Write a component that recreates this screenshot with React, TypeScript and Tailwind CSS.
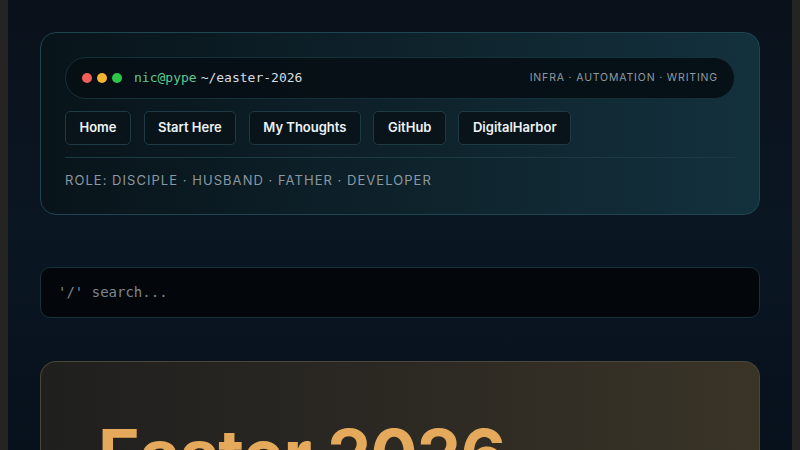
import React from "react";

const mono = { fontFamily: '"DejaVu Sans Mono", "Liberation Mono", monospace' };

export default function App() {
  const links = ["Home", "Start Here", "My Thoughts", "GitHub", "DigitalHarbor"];
  return (
    <div className="w-[800px] h-[450px] overflow-hidden bg-[#242424] flex" style={{ fontFamily: 'Inter, "Noto Sans", sans-serif' }}>
      <div className="ml-[8px] w-[784px] h-full bg-gradient-to-b from-[#0a111b] via-[#0a1622] to-[#07111c] px-[32px] pt-[32px] flex flex-col">
        <div className="shrink-0 rounded-[16px] border border-[#1f4550] bg-gradient-to-r from-[#08141a] via-[#0e222b] to-[#13313d] px-[24px] pt-[24px] pb-[25px]">
          <div className="h-[42px] rounded-full border border-[#16303a] bg-[#060e14]/90 flex items-center pl-[16px] pr-[16px]">
            <span className="w-[10px] h-[10px] rounded-full bg-[#f25f58]" />
            <span className="w-[10px] h-[10px] rounded-full bg-[#f3b52f] ml-[5px]" />
            <span className="w-[10px] h-[10px] rounded-full bg-[#2ec64a] ml-[5px]" />
            <span className="ml-[12px] text-[13px] text-[#5fc98f]" style={mono}>nic@pype</span>
            <span className="ml-[4px] text-[13px] text-[#d6dde2]" style={mono}>~/easter-2026</span>
            <span className="ml-auto text-[10.5px] tracking-[0.08em] text-[#8d9aa3]">INFRA · AUTOMATION · WRITING</span>
          </div>
          <div className="flex gap-[12.5px] mt-[12px]">
            {links.map((l) => (
              <div key={l} className="h-[34px] px-[13.5px] flex items-center rounded-[5px] border border-[#1e3a44] bg-[#08141a] text-[13px] font-semibold text-[#eef2f4]">
                {l}
              </div>
            ))}
          </div>
          <div className="h-px bg-[#1c3a44] mt-[12px]" />
          <div className="mt-[13px] text-[13px] leading-[18px] tracking-[0.08em] text-[#8a98a1]">ROLE: DISCIPLE · HUSBAND · FATHER · DEVELOPER</div>
        </div>
        <div className="shrink-0 mt-[52px] h-[51px] rounded-[10px] border border-[#173039] bg-[#03070b] flex items-center px-[17px]">
          <span className="text-[14px] text-[#7d868c]" style={mono}>'/' search...</span>
        </div>
        <div className="shrink-0 mt-[43px] h-[200px] rounded-t-[16px] border border-[#4a4638] border-b-0 bg-gradient-to-r from-[#1f1f1e] via-[#2c2923] to-[#3a3427] pl-[57px] pt-[58px]">
          <div className="text-[70px] leading-none font-bold text-[#e4a95a] tracking-[-0.01em]">Easter 2026</div>
        </div>
      </div>
    </div>
  );
}
